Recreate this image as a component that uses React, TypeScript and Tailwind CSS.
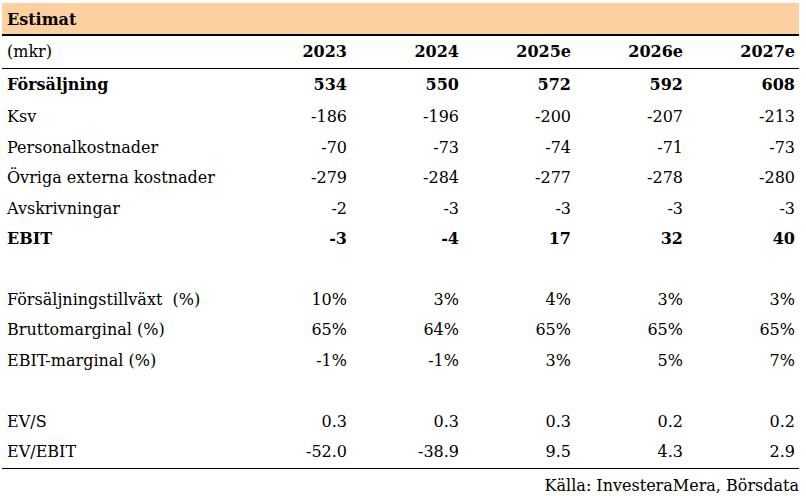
const years = ["2023", "2024", "2025e", "2026e", "2027e"];

type Row = { label?: string; values?: string[]; bold?: boolean };

const rows: Row[] = [
  { label: "Ksv", values: ["-186", "-196", "-200", "-207", "-213"] },
  { label: "Personalkostnader", values: ["-70", "-73", "-74", "-71", "-73"] },
  { label: "Övriga externa kostnader", values: ["-279", "-284", "-277", "-278", "-280"] },
  { label: "Avskrivningar", values: ["-2", "-3", "-3", "-3", "-3"] },
  { label: "EBIT", values: ["-3", "-4", "17", "32", "40"], bold: true },
  {},
  { label: "Försäljningstillväxt\u00a0 (%)", values: ["10%", "3%", "4%", "3%", "3%"] },
  { label: "Bruttomarginal (%)", values: ["65%", "64%", "65%", "65%", "65%"] },
  { label: "EBIT-marginal (%)", values: ["-1%", "-1%", "3%", "5%", "7%"] },
  {},
  { label: "EV/S", values: ["0.3", "0.3", "0.3", "0.2", "0.2"] },
  { label: "EV/EBIT", values: ["-52.0", "-38.9", "9.5", "4.3", "2.9"] },
];

export default function App() {
  return (
    <div className="w-[806px] h-[496px] bg-white text-black font-['DejaVu_Serif',serif] text-[16px] leading-none pt-[3px] px-[2px]">
      {/* Title bar */}
      <div className="w-[797px] h-[33px] bg-[#fdd0a2] border-b-[2px] border-black pl-[5px] pt-[3px] flex items-center font-bold">
        Estimat
      </div>

      {/* Column header */}
      <div className="w-[797px] h-[33px] border-b border-black flex items-center">
        <div className="w-[233px] pl-[5px]">(mkr)</div>
        {years.map((y) => (
          <div key={y} className="w-[112px] text-right font-bold">
            {y}
          </div>
        ))}
      </div>

      {/* Body */}
      <div className="w-[797px] border-b border-black pb-[1px]">
        <div className="h-[33px] pb-[2px] flex items-center font-bold">
          <div className="w-[233px] pl-[5px]">Försäljning</div>
          {["534", "550", "572", "592", "608"].map((v, j) => (
            <div key={j} className="w-[112px] text-right">
              {v}
            </div>
          ))}
        </div>
        {rows.map((r, i) => (
          <div key={i} className={`h-[30.45px] flex items-center ${r.bold ? "font-bold" : ""}`}>
            <div className="w-[233px] pl-[5px] whitespace-nowrap">{r.label}</div>
            {r.values?.map((v, j) => (
              <div key={j} className="w-[112px] text-right">
                {v}
              </div>
            ))}
          </div>
        ))}
      </div>

      <div className="w-[797px] text-right pt-[9px]">Källa: InvesteraMera, Börsdata</div>
    </div>
  );
}
